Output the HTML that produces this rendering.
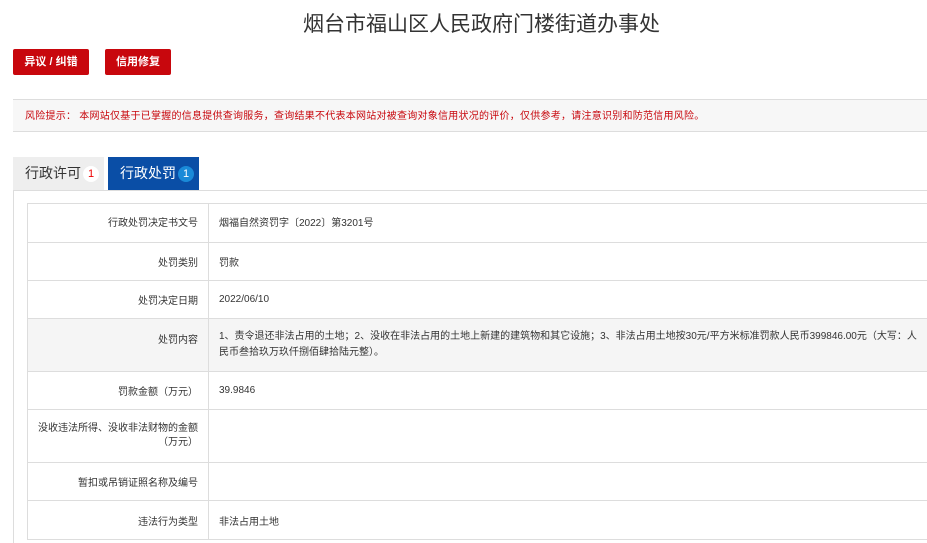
<!DOCTYPE html><html><head><meta charset="utf-8"><style>
*{margin:0;padding:0;box-sizing:border-box}
html,body{width:927px;height:543px;overflow:hidden}
body{background:#fff;font-family:"Liberation Sans","Noto Sans CJK SC",sans-serif;color:#333;position:relative}
.t{position:absolute;top:8px;left:0;width:963px;text-align:center;font-size:21px;color:#333}
.b{position:absolute;top:49px;height:26px;background:#c8070d;color:#fff;font-size:11px;line-height:26px;text-align:center;border-radius:2px;font-weight:bold}
.risk{position:absolute;left:13px;top:99px;width:914px;height:33px;background:#f7f7f7;border-top:1px solid #ddd;border-bottom:1px solid #ddd;color:#c8070d;font-size:10px;line-height:34px;padding-left:12px;white-space:nowrap;letter-spacing:0.25px}
.tab{position:absolute;top:157px;height:33px;font-size:14px;line-height:33px}
.badge{display:inline-block;width:16px;height:16px;border-radius:8px;font-size:11px;line-height:16px;text-align:center;vertical-align:middle;margin-left:2px}
.box{position:absolute;left:13px;top:190px;width:914px;height:353px;border-left:1px solid #ddd;border-top:1px solid #ddd}
table{position:absolute;left:27px;top:203px;border-collapse:collapse;width:910px;font-size:10px}
td{border:1px solid #ddd;padding:0 10px;vertical-align:middle}
td.l{width:181px;text-align:right}
</style></head><body>
<div class="t">烟台市福山区人民政府门楼街道办事处</div>
<div class="b" style="left:13px;width:76px">异议 / 纠错</div>
<div class="b" style="left:105px;width:66px">信用修复</div>
<div class="risk">风险提示： 本网站仅基于已掌握的信息提供查询服务，查询结果不代表本网站对被查询对象信用状况的评价，仅供参考，请注意识别和防范信用风险。</div>
<div class="tab" style="left:13px;width:91px;background:#eee;color:#333;padding-left:12px">行政许可<span class="badge" style="background:#fff;color:#e00">1</span></div>
<div class="tab" style="left:108px;width:91px;background:#0a4ea6;color:#fff;padding-left:12px">行政处罚<span class="badge" style="background:#1a8ad8;color:#fff">1</span></div>
<div class="box"></div>
<table>
<tr style="height:39px"><td class="l" style="padding-bottom:3px">行政处罚决定书文号</td><td style="padding-bottom:3px">烟福自然资罚字〔2022〕第3201号</td></tr>
<tr style="height:38px"><td class="l">处罚类别</td><td>罚款</td></tr>
<tr style="height:38px"><td class="l">处罚决定日期</td><td>2022/06/10</td></tr>
<tr style="height:53px;background:#f5f5f5"><td class="l" style="vertical-align:top;padding-top:12px">处罚内容</td><td style="line-height:16px">1、责令退还非法占用的土地；2、没收在非法占用的土地上新建的建筑物和其它设施；3、非法占用土地按30元/平方米标准罚款人民币399846.00元（大写：人民币叁拾玖万玖仟捌佰肆拾陆元整）。</td></tr>
<tr style="height:38px"><td class="l">罚款金额（万元）</td><td>39.9846</td></tr>
<tr style="height:53px"><td class="l" style="line-height:14px">没收违法所得、没收非法财物的金额（万元）</td><td></td></tr>
<tr style="height:38px"><td class="l">暂扣或吊销证照名称及编号</td><td></td></tr>
<tr style="height:39px"><td class="l">违法行为类型</td><td>非法占用土地</td></tr>
</table>
</body></html>
